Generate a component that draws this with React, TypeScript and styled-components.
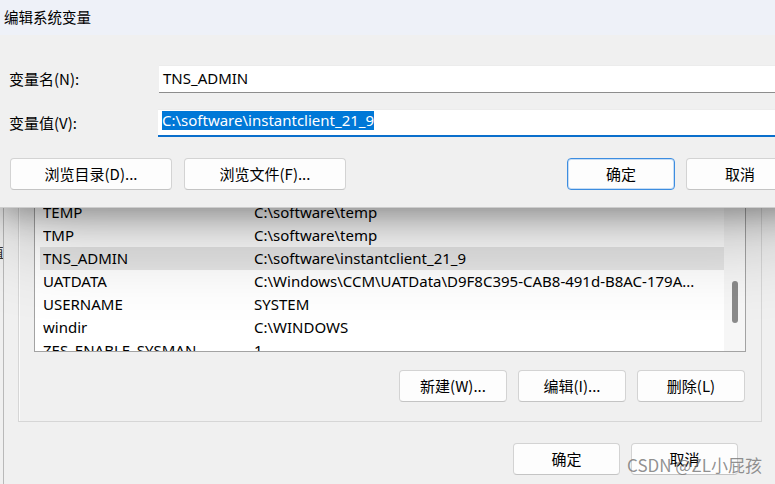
import React from "react";
import styled, { createGlobalStyle } from "styled-components";

const GlobalStyle = createGlobalStyle`
  html, body { margin: 0; padding: 0; background: #f0f0f0; }
  body { font-family: "Noto Sans", "Noto Sans CJK SC", sans-serif; }
  * { box-sizing: border-box; }
`;

const cjk = `"Noto Sans CJK SC", "Noto Sans", sans-serif`;

const Screen = styled.div`
  position: relative;
  width: 775px;
  height: 484px;
  overflow: hidden;
  background: #f0f0f0;
  display: flex;
  font-size: 15px;
  color: #000;
`;

/* window behind the environment dialog, only a sliver visible */
const BackSliver = styled.div`
  flex: none;
  width: 4px;
  overflow: hidden;
  display: flex;
  justify-content: flex-end;
  align-items: flex-start;
  padding-top: 241px;
  border-right: 1px solid #b9b9b9;
  font-family: ${cjk};
  font-size: 15px;
  color: #333;
`;

const SliverGlyph = styled.span`
  flex: none;
  margin-right: -1px;
`;

const EnvWindow = styled.div`
  flex: 1;
  display: flex;
  flex-direction: column;
  padding-top: 10px;
`;

const GroupBox = styled.div`
  margin-left: 14px;
  width: 744px;
  border: 1px solid #d6d6d6;
  box-shadow: inset 1px 1px 0 #fbfbfb;
  padding: 28px 15px 19px 15px;
  display: flex;
  flex-direction: column;
`;

const ListBox = styled.div`
  height: 313px;
  border: 1px solid #a3a3a3;
  background: #fff;
  display: flex;
  overflow: hidden;
`;

const Rows = styled.div`
  flex: 1;
  overflow: hidden;
  display: flex;
  flex-direction: column;
`;

const Row = styled.div<{ $selected?: boolean }>`
  flex: none;
  height: 23px;
  margin-left: 5px;
  padding-left: 3px;
  padding-bottom: 2px;
  display: grid;
  grid-template-columns: 211px 1fr;
  align-items: center;
  white-space: nowrap;
  background: ${(p) => (p.$selected ? "#e6e6e6" : "transparent")};
`;

const Cell = styled.span`
  overflow: hidden;
  line-height: 20px;
`;

const ScrollTrack = styled.div`
  flex: none;
  width: 21px;
  background: #f6f6f6;
  padding-top: 241px;
  padding-left: 8px;
`;

const ScrollThumb = styled.div`
  width: 6px;
  height: 42px;
  border-radius: 3px;
  background: #8a8a8a;
`;

const ButtonRow = styled.div<{ $gap: number; $top: number; $right: number; $left?: number }>`
  display: flex;
  justify-content: flex-end;
  gap: ${(p) => p.$gap}px;
  margin-top: ${(p) => p.$top}px;
  padding-right: ${(p) => p.$right}px;
  margin-left: ${(p) => p.$left ?? 0}px;
  width: ${(p) => (p.$left ? "744px" : "auto")};
`;

const WinButton = styled.button<{ $w: number; $h?: number; $focus?: boolean }>`
  flex: none;
  width: ${(p) => p.$w}px;
  height: ${(p) => p.$h ?? 32}px;
  font-family: ${cjk};
  font-size: 15px;
  line-height: 20px;
  color: #000;
  background: #fdfdfd;
  border: 1px solid ${(p) => (p.$focus ? "#3d8de0" : "#d3d3d3")};
  border-bottom-color: ${(p) => (p.$focus ? "#3d8de0" : "#c4c4c4")};
  box-shadow: ${(p) => (p.$focus ? "inset 0 0 0 1px rgba(61,141,224,0.28)" : "none")};
  border-radius: 4px;
  padding: 0 0 1px 0;
  display: flex;
  align-items: center;
  justify-content: center;
`;

/* The dialog in front */
const TopWindow = styled.div`
  position: absolute;
  top: 0;
  left: 0;
  right: -40px;
  z-index: 2;
  display: flex;
  flex-direction: column;
  box-shadow: 0 6px 28px rgba(0, 0, 0, 0.3), 0 18px 90px rgba(0, 0, 0, 0.3);
`;

const TitleBar = styled.div`
  height: 35px;
  background: #eef1f8;
  padding-left: 4px;
  padding-bottom: 2px;
  display: flex;
  align-items: center;
  font-family: ${cjk};
  font-size: 14.5px;
  line-height: 20px;
`;

const DialogBody = styled.div`
  height: 173px;
  background: #f0f0f0;
  border-bottom: 1px solid #cdcdcd;
  padding-top: 30px;
  display: flex;
  flex-direction: column;
`;

const FieldRow = styled.div<{ $top?: number }>`
  display: flex;
  align-items: center;
  height: 28px;
  margin-top: ${(p) => p.$top ?? 0}px;
`;

const Label = styled.div`
  flex: none;
  width: 159px;
  padding-left: 9px;
  padding-bottom: 1px;
  font-family: ${cjk};
  line-height: 20px;
`;

const TextField = styled.div<{ $focus?: boolean }>`
  flex: 1;
  height: 28px;
  background: #fff;
  margin-left: ${(p) => (p.$focus ? "-1px" : "0")};
  border-top: 1px solid #ececec;
  border-bottom: ${(p) => (p.$focus ? "2px solid #0a6fcc" : "1px solid #8d8d8d")};
  padding-left: 4px;
  padding-bottom: ${(p) => (p.$focus ? "0" : "2px")};
  display: flex;
  align-items: ${(p) => (p.$focus ? "flex-start" : "center")};
  padding-top: ${(p) => (p.$focus ? "1px" : "0")};
  white-space: nowrap;
`;

const Selection = styled.span`
  background: #0078d7;
  color: #fff;
  line-height: 19px;
  height: 19px;
`;

const DialogButtons = styled.div`
  display: flex;
  align-items: center;
  gap: 12px;
  margin-top: 21px;
  padding-left: 10px;
  padding-right: 21px;
`;

const OkCancel = styled.div`
  margin-left: auto;
  display: flex;
  gap: 11px;
`;

const Watermark = styled.div`
  position: absolute;
  left: 627px;
  top: 453px;
  z-index: 3;
  font-family: ${cjk};
  font-size: 17px;
  line-height: 24px;
  color: rgba(125, 125, 125, 0.85);
  white-space: nowrap;
`;

const rows: { name: string; value: string; selected?: boolean }[] = [
  { name: "NUMBER_OF_PROCESSORS", value: "4" },
  { name: "OS", value: "Windows_NT" },
  { name: "Path", value: "C:\\Windows\\system32;C:\\Windows;..." },
  { name: "PATHEXT", value: ".COM;.EXE;.BAT;.CMD;.VBS;.VBE;.JS;..." },
  { name: "PROCESSOR_ARCHITECTURE", value: "AMD64" },
  { name: "PROCESSOR_LEVEL", value: "6" },
  { name: "PSModulePath", value: "%ProgramFiles%\\WindowsPowerShell\\Modules;..." },
  { name: "TEMP", value: "C:\\software\\temp" },
  { name: "TMP", value: "C:\\software\\temp" },
  { name: "TNS_ADMIN", value: "C:\\software\\instantclient_21_9", selected: true },
  { name: "UATDATA", value: "C:\\Windows\\CCM\\UATData\\D9F8C395-CAB8-491d-B8AC-179A..." },
  { name: "USERNAME", value: "SYSTEM" },
  { name: "windir", value: "C:\\WINDOWS" },
  { name: "ZES_ENABLE_SYSMAN", value: "1" },
];

export default function App() {
  return (
    <>
      <GlobalStyle />
      <Screen>
        <BackSliver>
          <SliverGlyph>值</SliverGlyph>
        </BackSliver>
        <EnvWindow>
          <GroupBox>
            <ListBox>
              <Rows>
                {rows.map((r) => (
                  <Row key={r.name} $selected={r.selected}>
                    <Cell>{r.name}</Cell>
                    <Cell>{r.value}</Cell>
                  </Row>
                ))}
              </Rows>
              <ScrollTrack>
                <ScrollThumb />
              </ScrollTrack>
            </ListBox>
            <ButtonRow $gap={11} $top={18} $right={1}>
              <WinButton $w={108}>新建(W)...</WinButton>
              <WinButton $w={108}>编辑(I)...</WinButton>
              <WinButton $w={108}>删除(L)</WinButton>
            </ButtonRow>
          </GroupBox>
          <ButtonRow $gap={11} $top={21} $right={24} $left={14}>
            <WinButton $w={107}>确定</WinButton>
            <WinButton $w={107}>取消</WinButton>
          </ButtonRow>
        </EnvWindow>

        <TopWindow>
          <TitleBar>编辑系统变量</TitleBar>
          <DialogBody>
            <FieldRow>
              <Label>变量名(N):</Label>
              <TextField>TNS_ADMIN</TextField>
            </FieldRow>
            <FieldRow $top={16}>
              <Label>变量值(V):</Label>
              <TextField $focus>
                <Selection>C:\software\instantclient_21_9</Selection>
              </TextField>
            </FieldRow>
            <DialogButtons>
              <WinButton $w={162}>浏览目录(D)...</WinButton>
              <WinButton $w={162}>浏览文件(F)...</WinButton>
              <OkCancel>
                <WinButton $w={108} $focus>确定</WinButton>
                <WinButton $w={108}>取消</WinButton>
              </OkCancel>
            </DialogButtons>
          </DialogBody>
        </TopWindow>

        <Watermark>CSDN @ZL小屁孩</Watermark>
      </Screen>
    </>
  );
}
